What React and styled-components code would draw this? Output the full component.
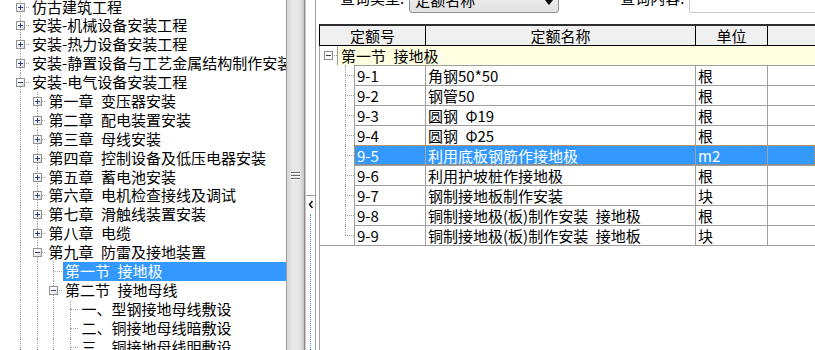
import React from 'react'
import styled, { createGlobalStyle, css } from 'styled-components'

const GlobalStyle = createGlobalStyle`
  html, body {
    margin: 0;
    padding: 0;
    background: #fff;
    overflow: hidden;
  }
`

const treeRows = [
    { label: '仿古建筑工程', guides: [], kind: 'plus', next: true },
    { label: '安装-机械设备安装工程', guides: [], kind: 'plus', next: true },
    { label: '安装-热力设备安装工程', guides: [], kind: 'plus', next: true },
    { label: '安装-静置设备与工艺金属结构制作安装工程', guides: [], kind: 'plus', next: true },
    { label: '安装-电气设备安装工程', guides: [], kind: 'minus', next: true },
    { label: '第一章\u2002变压器安装', guides: [1], kind: 'plus', next: true },
    { label: '第二章\u2002配电装置安装', guides: [1], kind: 'plus', next: true },
    { label: '第三章\u2002母线安装', guides: [1], kind: 'plus', next: true },
    { label: '第四章\u2002控制设备及低压电器安装', guides: [1], kind: 'plus', next: true },
    { label: '第五章\u2002蓄电池安装', guides: [1], kind: 'plus', next: true },
    { label: '第六章\u2002电机检查接线及调试', guides: [1], kind: 'plus', next: true },
    { label: '第七章\u2002滑触线装置安装', guides: [1], kind: 'plus', next: true },
    { label: '第八章\u2002电缆', guides: [1], kind: 'plus', next: true },
    { label: '第九章\u2002防雷及接地装置', guides: [1], kind: 'minus', next: true },
    { label: '第一节\u2002接地极', guides: [1, 1], kind: 'leaf', next: true, selected: true },
    { label: '第二节\u2002接地母线', guides: [1, 1], kind: 'minus', next: true },
    { label: '一、型钢接地母线敷设', guides: [1, 1, 1], kind: 'leaf', next: true },
    { label: '二、铜接地母线暗敷设', guides: [1, 1, 1], kind: 'leaf', next: true },
    { label: '三、铜接地母线明敷设', guides: [1, 1, 1], kind: 'leaf', next: true },
]

const quotaRows = [
    { code: '9-1', name: '角钢50*50', unit: '根' },
    { code: '9-2', name: '钢管50', unit: '根' },
    { code: '9-3', name: '圆钢\u2002Φ19', unit: '根' },
    { code: '9-4', name: '圆钢\u2002Φ25', unit: '根' },
    { code: '9-5', name: '利用底板钢筋作接地极', unit: 'm2', selected: true },
    { code: '9-6', name: '利用护坡桩作接地极', unit: '根' },
    { code: '9-7', name: '钢制接地板制作安装', unit: '块' },
    { code: '9-8', name: '铜制接地极(板)制作安装\u2002接地极', unit: '根' },
    { code: '9-9', name: '铜制接地极(板)制作安装\u2002接地板', unit: '块' },
]

function App() {
    return (
        <>
            <GlobalStyle />
            <Frame>
                <TreePanel>
                    <TreeList>
                        {treeRows.map((row, i) => (
                            <TreeRow key={i}>
                                {row.guides.map((g, j) => <Guide key={j} $line={!!g} />)}
                                <NodeCell $next={row.next}>
                                    {row.kind !== 'leaf' && <ToggleBox $plus={row.kind === 'plus'} />}
                                </NodeCell>
                                <TreeLabel $selected={row.selected}>{row.label}</TreeLabel>
                            </TreeRow>
                        ))}
                    </TreeList>
                </TreePanel>

                <Splitter>
                    <Grip><span /><span /><span /></Grip>
                </Splitter>

                <Strip>
                    <StripSpacer />
                    <CollapseBox>
                        <svg width="6" height="9" viewBox="0 0 6 9">
                            <polyline points="4.5,1 1.5,4.5 4.5,8" fill="none" stroke="#000" strokeWidth="1.4" />
                        </svg>
                        <DotLine />
                    </CollapseBox>
                </Strip>

                <Main>
                    <TopBar>
                        <QueryLabel $gap={0}>查询类型:</QueryLabel>
                        <Select>
                            <span>定额名称</span>
                            <ArrowBox>
                                <svg width="8" height="5" viewBox="0 0 8 5">
                                    <polygon points="0,0 8,0 4,5" fill="#000" />
                                </svg>
                            </ArrowBox>
                        </Select>
                        <QueryLabel $gap={61}>查询内容:</QueryLabel>
                        <SearchInput />
                    </TopBar>

                    <Grid>
                        <Header>
                            <HeadCell $w={106}>定额号</HeadCell>
                            <HeadCell $w={270}>定额名称</HeadCell>
                            <HeadCell $w={72}>单位</HeadCell>
                            <HeadCell $last />
                        </Header>

                        <Rows>
                            <GroupRow>
                                <GroupNode>
                                    <ToggleBox $gray />
                                </GroupNode>
                                <GroupLabel>第一节{'\u2002'}接地极</GroupLabel>
                            </GroupRow>
                            {quotaRows.map((r, i) => (
                                <DataRow key={r.code}>
                                    <RowTree $last={i === quotaRows.length - 1} />
                                    <RowCells $selected={r.selected}>
                                        <Cell $w={71}>{r.code}</Cell>
                                        <Cell $w={270}>{r.name}</Cell>
                                        <Cell $w={72}>{r.unit}</Cell>
                                        <Cell $last />
                                    </RowCells>
                                </DataRow>
                            ))}
                        </Rows>
                    </Grid>
                </Main>
            </Frame>
        </>
    )
}

const dotted = '1px dotted #a0a0a0'

const Frame = styled.div`
    display: flex;
    width: 815px;
    height: 350px;
    overflow: hidden;
    background: #fff;
    color: #000;
    font-family: "Noto Sans CJK SC", "Noto Sans", sans-serif;
    font-size: 15px;
`

const TreePanel = styled.div`
    flex: none;
    width: 287px;
    box-sizing: border-box;
    border-right: 1px solid #a0a0a0;
    overflow: hidden;
`

const TreeList = styled.div`
    margin-top: -2.45px;
    padding-left: 12px;
`

const TreeRow = styled.div`
    display: flex;
    height: 18.9px;
    white-space: nowrap;
`

const Guide = styled.div`
    flex: none;
    width: 16.5px;
    position: relative;
    &::before {
        content: '';
        display: ${p => (p.$line ? 'block' : 'none')};
        position: absolute;
        left: 8px;
        top: 0;
        bottom: 0;
        border-left: ${dotted};
    }
`

const NodeCell = styled.div`
    flex: none;
    width: 16.5px;
    position: relative;
    display: flex;
    align-items: center;
    &::before {
        content: '';
        position: absolute;
        left: 8px;
        top: 0;
        bottom: ${p => (p.$next ? '0' : '50%')};
        border-left: ${dotted};
    }
    &::after {
        content: '';
        position: absolute;
        left: 8px;
        right: 0;
        top: 9px;
        border-top: ${dotted};
    }
`

const ToggleBox = styled.div`
    position: relative;
    z-index: 1;
    flex: none;
    width: 9px;
    height: 9px;
    box-sizing: border-box;
    margin-left: 4px;
    border: 1px solid ${p => (p.$gray ? '#8c8c8c' : '#939393')};
    background: ${p => (p.$gray ? '#fff' : 'linear-gradient(135deg, #ffffff 35%, #d9d9d9)')};
    &::before {
        content: '';
        position: absolute;
        left: 1px;
        top: 3px;
        width: 5px;
        height: 1px;
        background: ${p => (p.$gray ? '#404040' : '#24408e')};
    }
    ${p => p.$plus && css`
        &::after {
            content: '';
            position: absolute;
            left: 3px;
            top: 1px;
            width: 1px;
            height: 5px;
            background: #24408e;
        }
    `}
`

const TreeLabel = styled.div`
    margin-left: 1.5px;
    padding: 0 2px;
    line-height: 18.9px;
    ${p => p.$selected && css`
        flex: 1;
        background: #3399ff;
        color: #fff;
    `}
`

const Splitter = styled.div`
    flex: none;
    width: 18px;
    box-sizing: border-box;
    border-right: 1px solid #8c8c8c;
    background: linear-gradient(to right, #d4d4d4 0%, #e9e9e9 35%, #e5e5e5 75%, #c6c6c6 100%);
    display: flex;
    align-items: center;
    justify-content: center;
`

const Grip = styled.div`
    display: flex;
    flex-direction: column;
    gap: 2px;
    span {
        display: block;
        width: 9px;
        height: 1px;
        background: #6a6a6a;
        box-shadow: 0 1px 0 #fafafa;
    }
`

const Strip = styled.div`
    flex: none;
    width: 11px;
    box-sizing: border-box;
    border-left: 1px solid #c4c4c4;
    border-right: 1px solid #a0a0a0;
    display: flex;
    flex-direction: column;
    background: #fff;
`

const StripSpacer = styled.div`
    flex: none;
    height: 195px;
`

const CollapseBox = styled.div`
    flex: 1;
    border-top: 1px solid #a0a0a0;
    display: flex;
    flex-direction: column;
    align-items: center;
    padding-top: 4px;
`

const DotLine = styled.div`
    flex: 1;
    width: 0;
    margin-top: 5px;
    border-left: 1px dotted #3d8ee0;
`

const Main = styled.div`
    flex: 1;
    min-width: 0;
    margin-left: 3px;
    display: flex;
    flex-direction: column;
`

const TopBar = styled.div`
    flex: none;
    display: flex;
    align-items: flex-start;
    height: 24px;
    padding-left: 21px;
    white-space: nowrap;
`

const QueryLabel = styled.div`
    margin-left: ${p => p.$gap}px;
    margin-top: -11px;
    line-height: 18px;
`

const Select = styled.div`
    flex: none;
    width: 150px;
    height: 22px;
    box-sizing: border-box;
    margin: -9px 0 0 5px;
    border: 1px solid #8e8f8f;
    border-radius: 3px;
    background: linear-gradient(#f3f3f3, #e1e1e1);
    display: flex;
    span {
        flex: 1;
        padding-left: 5px;
        line-height: 15px;
    }
`

const ArrowBox = styled.div`
    flex: none;
    width: 18px;
    display: flex;
    align-items: center;
    justify-content: center;
`

const SearchInput = styled.div`
    flex: 1;
    height: 22px;
    box-sizing: border-box;
    margin: -9px -10px 0 5px;
    border: 1px solid #c5cad3;
    border-radius: 2px;
    background: #fff;
`

const Grid = styled.div`
    flex: 1;
    display: flex;
    flex-direction: column;
    border-left: 1px solid #a0a0a0;
`

const Header = styled.div`
    flex: none;
    display: flex;
    height: 22px;
    box-sizing: border-box;
    margin-left: -1px;
    border-top: 2px solid #2e2e2e;
    border-bottom: 1px solid #000;
    border-left: 1px solid #000;
    background: #f0f0f0;
`

const HeadCell = styled.div`
    box-sizing: border-box;
    ${p => (p.$last ? 'flex: 1;' : `flex: none; width: ${p.$w}px; border-right: 1px solid #000;`)}
    text-align: center;
    line-height: 19px;
    white-space: nowrap;
`

const Rows = styled.div`
    border-bottom: 1px solid #a0a0a0;
`

const GroupRow = styled.div`
    display: flex;
    height: 19px;
`

const GroupNode = styled.div`
    flex: none;
    width: 17px;
    position: relative;
    display: flex;
    align-items: center;
    &::after {
        content: '';
        position: absolute;
        left: 14px;
        right: 0;
        top: 9px;
        border-top: ${dotted};
    }
`

const GroupLabel = styled.div`
    flex: 1;
    border-left: 1px solid #a0a0a0;
    background: #ffffe1;
    padding-left: 3px;
    line-height: 19px;
    white-space: nowrap;
`

const DataRow = styled.div`
    display: flex;
    height: 20px;
`

const RowTree = styled.div`
    flex: none;
    width: 34px;
    position: relative;
    &::before {
        content: '';
        position: absolute;
        left: 25px;
        top: 0;
        bottom: ${p => (p.$last ? '10px' : '0')};
        border-left: ${dotted};
    }
    &::after {
        content: '';
        position: absolute;
        left: 25px;
        right: 0;
        top: 10px;
        border-top: ${dotted};
    }
`

const RowCells = styled.div`
    flex: 1;
    display: flex;
    box-sizing: border-box;
    border-top: 1px solid #a0a0a0;
    border-left: 1px solid #a0a0a0;
    background: ${p => (p.$selected ? '#3399ff' : '#fff')};
    color: ${p => (p.$selected ? '#fff' : '#000')};
    ${p => p.$selected && css`
        outline: 1px dotted #d9822b;
        outline-offset: -1px;
    `}
`

const Cell = styled.div`
    box-sizing: border-box;
    ${p => (p.$last ? 'flex: 1;' : `flex: none; width: ${p.$w}px; border-right: 1px solid #a0a0a0;`)}
    padding-left: 2px;
    line-height: 19px;
    white-space: nowrap;
    overflow: hidden;
`

export default App
